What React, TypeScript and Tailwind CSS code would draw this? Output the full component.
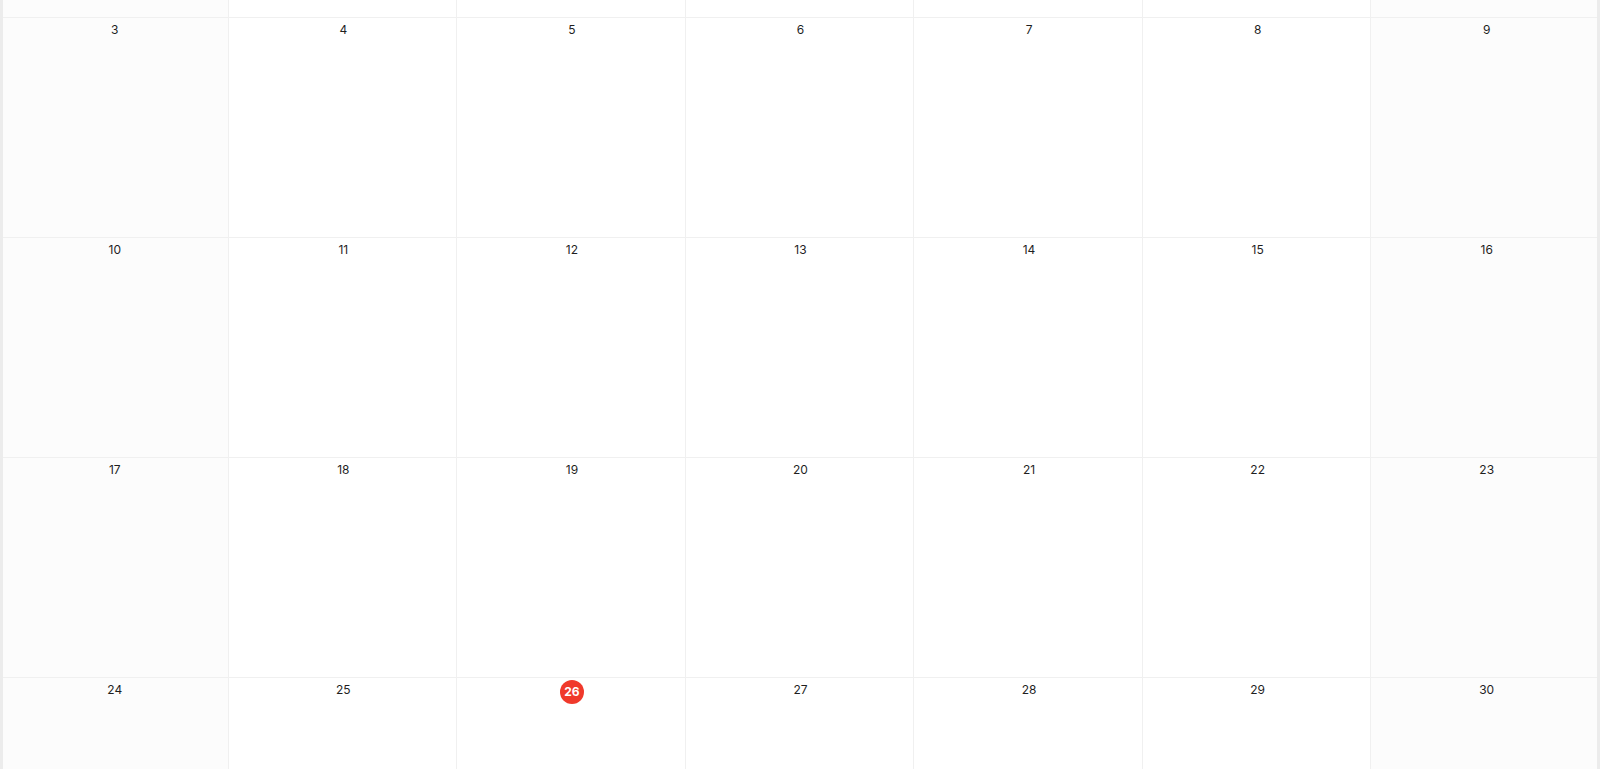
import React from "react";

const weeks: number[][] = [
  [0, 0, 0, 0, 0, 0, 0],
  [3, 4, 5, 6, 7, 8, 9],
  [10, 11, 12, 13, 14, 15, 16],
  [17, 18, 19, 20, 21, 22, 23],
  [24, 25, 26, 27, 28, 29, 30],
];

export default function App() {
  return (
    <div
      className="relative w-[1600px] h-[769px] overflow-hidden bg-white"
      style={{ fontFamily: "Inter, 'Noto Sans', sans-serif" }}
    >
      <div className="flex flex-col -mt-[202px]">
        {weeks.map((week, wi) => (
          <div key={wi} className="grid grid-cols-7 h-[220px] border-b border-[#f0f0f0]">
            {week.map((d, di) => {
              const weekend = di === 0 || di === 6;
              const today = d === 26;
              return (
                <div
                  key={di}
                  className={`flex justify-center pl-[2px] ${di < 6 ? "border-r border-[#f0f0f0]" : ""} ${
                    weekend ? "bg-[#fcfcfc]" : "bg-white"
                  }`}
                >
                  {d > 0 &&
                    (today ? (
                      <span className="mt-[2px] flex items-center justify-center w-6 h-6 rounded-full bg-[#f0392b] text-white text-xs font-bold">
                        {d}
                      </span>
                    ) : (
                      <span className="h-6 flex items-center text-xs text-[#1f1f1f]">{d}</span>
                    ))}
                </div>
              );
            })}
          </div>
        ))}
      </div>
      <div className="pointer-events-none absolute inset-0 shadow-[inset_3px_0_0_#ececec,inset_-3px_0_0_#ececec]" />
    </div>
  );
}
